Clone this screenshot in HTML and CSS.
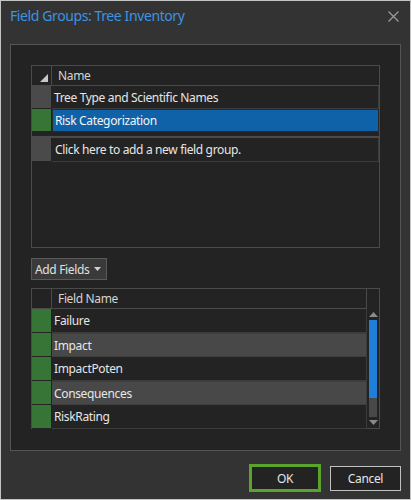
FILE: index.html
```html
<!DOCTYPE html>
<html>
<head>
<meta charset="utf-8">
<link rel="stylesheet" href="styles.css">
</head>
<body>
<div class="window">
  <div class="titlebar">
    <span class="title">Field Groups: Tree Inventory</span>
    <svg class="close" width="11" height="11" viewBox="0 0 11 11"><path d="M0.5 0.5 L10.5 10.5 M10.5 0.5 L0.5 10.5" stroke="#9a9a9a" stroke-width="1.3" fill="none"/></svg>
  </div>
  <div class="panel">
    <div class="grid groups">
      <div class="row head">
        <div class="rh"><svg width="8" height="8" viewBox="0 0 8 8"><path d="M8 0 L8 8 L0 8 Z" fill="#c8c8c8"/></svg></div>
        <div class="cell">Name</div>
      </div>
      <div class="row">
        <div class="rh"></div>
        <div class="cell">Tree Type and Scientific Names</div>
      </div>
      <div class="row sel">
        <div class="rh green"></div>
        <div class="cell">Risk Categorization</div>
      </div>
      <div class="row newrow">
        <div class="rh"></div>
        <div class="cell">Click here to add a new field group.</div>
      </div>
    </div>
    <div class="addbtn">Add Fields <svg width="7" height="4" viewBox="0 0 7 4"><path d="M0 0 L7 0 L3.5 4 Z" fill="#d0d0d0"/></svg></div>
    <div class="grid fields">
      <div class="frows">
        <div class="row head">
          <div class="rh"></div>
          <div class="cell">Field Name</div>
        </div>
        <div class="row">
          <div class="rh green"></div>
          <div class="cell">Failure</div>
        </div>
        <div class="row hl">
          <div class="rh green"></div>
          <div class="cell">Impact</div>
        </div>
        <div class="row">
          <div class="rh green"></div>
          <div class="cell">ImpactPoten</div>
        </div>
        <div class="row hl">
          <div class="rh green"></div>
          <div class="cell">Consequences</div>
        </div>
        <div class="row">
          <div class="rh green"></div>
          <div class="cell">RiskRating</div>
        </div>
      </div>
      <div class="scroll">
        <svg class="arrow" width="9" height="5" viewBox="0 0 9 5"><path d="M4.5 0 L9 5 L0 5 Z" fill="#8a8a8a"/></svg>
        <div class="track"><div class="thumb"></div></div>
        <svg class="arrow" width="9" height="5" viewBox="0 0 9 5"><path d="M0 0 L9 0 L4.5 5 Z" fill="#8a8a8a"/></svg>
      </div>
    </div>
  </div>
  <div class="footer">
    <div class="btn ok">OK</div>
    <div class="btn cancel">Cancel</div>
  </div>
</div>
</body>
</html>
```
FILE: styles.css
```css
* { box-sizing: border-box; }
html, body { margin: 0; padding: 0; background: #333333; }
body { font-family: "Noto Sans", "Open Sans", sans-serif; font-size: 12px; letter-spacing: -0.35px; color: #e6e6e6; }
.window {
  width: 411px; height: 500px;
  border: 1px solid #c4c4c4;
  background: #333333;
  display: flex; flex-direction: column;
}
.titlebar {
  height: 43px;
  display: flex; align-items: flex-start; justify-content: space-between;
  padding: 5px 11px 0 9px;
}
.title { color: #3a94e4; font-size: 14px; letter-spacing: -0.4px; line-height: 19px; }
.close { margin-top: 5px; }
.panel {
  margin: 0 9px;
  height: 407px;
  border: 1px solid #555555;
  background: #232323;
  padding: 20px 20px 0 20px;
}
.grid { border: 1px solid #4a4a4a; background: #232323; }
.groups { width: 349px; height: 183px; }
.row { display: flex; height: 23px; }
.rh { width: 20px; flex: none; background: #4a4a4a; border-right: 1px solid #232323; border-bottom: 1px solid #232323; display: flex; align-items: flex-end; justify-content: flex-end; padding: 0 3px 3px 0; }
.rh.green { background: #377537; }
.cell { flex: 1; display: flex; align-items: center; padding-left: 2px; border-bottom: 1px solid #3c3c3c; border-right: 1px solid #3c3c3c; white-space: nowrap; }
.head { height: 20px; }
.head .rh { background: #232323; border-right: 1px solid #4a4a4a; border-bottom: 1px solid #4a4a4a; }
.head .cell { padding-left: 6px; color: #d4d4d4; border-bottom: 1px solid #4a4a4a; border-right: none; }
.sel .cell { background: #1062a8; border: 1px solid #2a2a2a; color: #f4f4f4; }
.newrow { margin-top: 4px; border-top: 2px solid #4a4a4a; height: 26px; }
.newrow .cell { padding-left: 3px; }
.addbtn {
  margin-top: 10px;
  width: 76px; height: 22px;
  border: 1px solid #5a5a5a; background: #3a3a3a;
  display: flex; align-items: center; gap: 5px;
  padding-left: 3px; color: #e0e0e0;
}
.fields { margin-top: 8px; width: 349px; height: 141px; display: flex; }
.frows { flex: 1; }
.fields .row { height: 24px; }
.fields .head { height: 20px; }
.fields .head .rh { background: #232323; }
.fields .row .cell { border-right: 1px solid #3c3c3c; }
.fields .head .cell { border-right: 1px solid #4a4a4a; }
.hl .cell { background: #484848; border-top: 1px solid #3e3e3e; border-bottom: 1px solid #3e3e3e; }
.scroll { width: 12px; flex: none; display: flex; flex-direction: column; align-items: center; padding-top: 23px; }
.arrow { flex: none; }
.track { width: 8px; height: 97px; margin: 3px 0; background: #484848; }
.thumb { height: 78px; background: #1f7fd8; }
.footer { flex: 1; display: flex; justify-content: flex-end; align-items: flex-start; padding: 13px 9px 0 0; gap: 9px; }
.btn { display: flex; align-items: center; justify-content: center; background: #232323; color: #e6e6e6; }
.ok { width: 72px; height: 28px; border: 3px solid #5ba42c; }
.cancel { width: 71px; height: 25px; border: 1px solid #c0c0c0; margin-top: 2px; }
```
